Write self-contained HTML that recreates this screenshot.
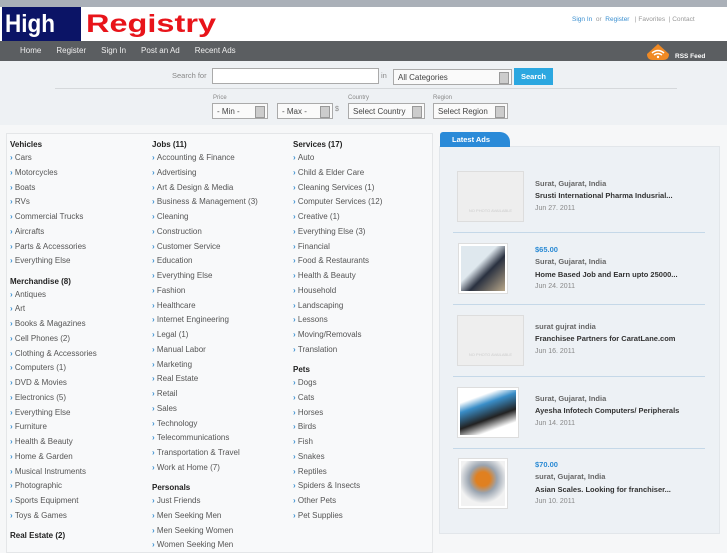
<!DOCTYPE html>
<html><head><meta charset="utf-8"><style>
*{margin:0;padding:0;box-sizing:border-box}
body{width:727px;height:545px;overflow:hidden;background:#f6f7f8;font-family:"Liberation Sans",sans-serif;position:relative}
.a{position:absolute;white-space:nowrap}
.sel{position:absolute;height:16px;border:1px solid #aaa;background:#fafafa;font-size:8px;color:#444;padding:3px 4px;line-height:9px}
.sel:after{content:"";position:absolute;right:2px;top:2px;width:8px;height:10px;background:#ccc;border:1px solid #999}
.col{position:absolute;top:139px;font-size:8px;color:#555;width:140px}
.col div{line-height:14.75px;height:14.75px}
.col div:before{content:"› ";color:#3a8fd0;font-weight:bold}
.col h4{font-size:8px;color:#222;line-height:12px;height:12px;margin-top:6.5px}
.col h4:first-child{margin-top:0}
.ad{position:absolute;left:535px;font-size:7.5px;font-weight:bold;line-height:12.3px}
.ad .p{color:#2a8ad4}.ad .l{color:#666}.ad .t{color:#333}.ad .d{color:#888;font-weight:normal;font-size:7px}
.img{position:absolute;border:1px solid #ddd;background:#fff;padding:2px}
.np{position:absolute;border:1px solid #ddd;background:#eee;font-size:4px;color:#ccc;text-align:center;padding-top:36px}
.sep{position:absolute;left:453px;width:252px;height:1px;background:#c5d8e8}
</style></head><body>
<div class="a" style="left:0;top:0;width:727px;height:7px;background:#aab0b8"></div>
<div class="a" style="left:0;top:7px;width:727px;height:34px;background:#fff"></div>
<div class="a" style="left:2px;top:7px;width:79px;height:34px;background:#0b1466"></div>
<div class="a" style="left:5px;top:10px;font:bold 25px/28px 'Liberation Sans',sans-serif;color:#fff;transform:scaleX(0.9);transform-origin:0 0">High</div>
<div class="a" style="left:86px;top:10px;font:bold 25px/28px 'Liberation Sans',sans-serif;color:#e8141a;transform:scaleX(1.3);transform-origin:0 0">Registry</div>
<div class="a" style="left:572px;top:16px;font-size:6.5px;color:#999"><span style="color:#3a8fd0">Sign In</span> &nbsp;or&nbsp; <span style="color:#3a8fd0">Register</span> &nbsp; | Favorites &nbsp;| Contact</div>
<div class="a" style="left:0;top:41px;width:727px;height:20px;background:#5b5e61"></div>
<div class="a" style="left:20px;top:46px;font-size:8px;color:#eee;word-spacing:0"><span>Home</span><span style="margin-left:15px">Register</span><span style="margin-left:15px">Sign In</span><span style="margin-left:15px">Post an Ad</span><span style="margin-left:15px">Recent Ads</span></div>
<svg class="a" style="left:645px;top:43px" width="26" height="18" viewBox="0 0 26 18"><path d="M2 11 L13 1 L24 11 Q24 17 18 17 L8 17 Q2 17 2 11Z" fill="#f08a24"/><path d="M7 10 Q13 5 19 10 M9 12 Q13 9 17 12" stroke="#fff" stroke-width="1.5" fill="none"/><circle cx="13" cy="14" r="1.2" fill="#fff"/></svg>
<div class="a" style="left:675px;top:53px;font-size:6.5px;font-weight:bold;color:#fff">RSS Feed</div>
<div class="a" style="left:0;top:61px;width:727px;height:64px;background:#eef1f4"></div>
<div class="a" style="left:172px;top:71px;font-size:7.5px;color:#888">Search for</div>
<div class="a" style="left:212px;top:68px;width:167px;height:16px;border:1px solid #aaa;background:#fff"></div>
<div class="a" style="left:381px;top:71px;font-size:7.5px;color:#888">in</div>
<div class="sel" style="left:393px;top:69px;width:119px">All Categories</div>
<div class="a" style="left:514px;top:68px;width:39px;height:17px;background:#2ba7e0;color:#fff;font-size:7.5px;font-weight:bold;text-align:center;line-height:17px">Search</div>
<div class="a" style="left:55px;top:88px;width:622px;height:1px;background:#d5d8db"></div>
<div class="a" style="left:213px;top:95px;font-size:6px;color:#888">Price</div>
<div class="a" style="left:348px;top:95px;font-size:6px;color:#888">Country</div>
<div class="a" style="left:433px;top:95px;font-size:6px;color:#888">Region</div>
<div class="sel" style="left:212px;top:103px;width:56px">- Min -</div>
<div class="sel" style="left:277px;top:103px;width:56px">- Max -</div>
<div class="a" style="left:335px;top:106px;font-size:7px;color:#888">$</div>
<div class="sel" style="left:348px;top:103px;width:77px">Select Country</div>
<div class="sel" style="left:433px;top:103px;width:75px">Select Region</div>
<div class="a" style="left:6px;top:133px;width:427px;height:420px;background:#f8f9fa;border:1px solid #e4e6e8"></div>
<div class="col" style="left:10px">
<h4>Vehicles</h4><div>Cars</div><div>Motorcycles</div><div>Boats</div><div>RVs</div><div>Commercial Trucks</div><div>Aircrafts</div><div>Parts &amp; Accessories</div><div>Everything Else</div>
<h4>Merchandise (8)</h4><div>Antiques</div><div>Art</div><div>Books &amp; Magazines</div><div>Cell Phones (2)</div><div>Clothing &amp; Accessories</div><div>Computers (1)</div><div>DVD &amp; Movies</div><div>Electronics (5)</div><div>Everything Else</div><div>Furniture</div><div>Health &amp; Beauty</div><div>Home &amp; Garden</div><div>Musical Instruments</div><div>Photographic</div><div>Sports Equipment</div><div>Toys &amp; Games</div>
<h4>Real Estate (2)</h4>
</div>
<div class="col" style="left:152px">
<h4>Jobs (11)</h4><div>Accounting &amp; Finance</div><div>Advertising</div><div>Art &amp; Design &amp; Media</div><div>Business &amp; Management (3)</div><div>Cleaning</div><div>Construction</div><div>Customer Service</div><div>Education</div><div>Everything Else</div><div>Fashion</div><div>Healthcare</div><div>Internet Engineering</div><div>Legal (1)</div><div>Manual Labor</div><div>Marketing</div><div>Real Estate</div><div>Retail</div><div>Sales</div><div>Technology</div><div>Telecommunications</div><div>Transportation &amp; Travel</div><div>Work at Home (7)</div>
<h4>Personals</h4><div>Just Friends</div><div>Men Seeking Men</div><div>Men Seeking Women</div><div>Women Seeking Men</div>
</div>
<div class="col" style="left:293px">
<h4>Services (17)</h4><div>Auto</div><div>Child &amp; Elder Care</div><div>Cleaning Services (1)</div><div>Computer Services (12)</div><div>Creative (1)</div><div>Everything Else (3)</div><div>Financial</div><div>Food &amp; Restaurants</div><div>Health &amp; Beauty</div><div>Household</div><div>Landscaping</div><div>Lessons</div><div>Moving/Removals</div><div>Translation</div>
<h4>Pets</h4><div>Dogs</div><div>Cats</div><div>Horses</div><div>Birds</div><div>Fish</div><div>Snakes</div><div>Reptiles</div><div>Spiders &amp; Insects</div><div>Other Pets</div><div>Pet Supplies</div>
</div>
<div class="a" style="left:439px;top:146px;width:281px;height:388px;background:#edf1f5;border:1px solid #e2e6ea"></div>
<div class="a" style="left:440px;top:132px;width:70px;height:15px;background:#2a8ad8;border-radius:3px 10px 0 0;color:#fff;font-size:7.5px;font-weight:bold;padding:3px 0 0 12px">Latest Ads</div>

<div class="np" style="left:457px;top:171px;width:67px;height:51px">NO PHOTO AVAILABLE</div>
<div class="ad" style="top:178px"><div class="l">Surat, Gujarat, India</div><div class="t">Srusti International Pharma Indusrial...</div><div class="d">Jun 27. 2011</div></div>
<div class="sep" style="top:232px"></div>
<div class="img" style="left:458px;top:243px;width:50px;height:51px"><div style="width:100%;height:100%;background:linear-gradient(135deg,#dfe8ee 40%,#2a3140 60%,#b9a88a)"></div></div>
<div class="ad" style="top:244px"><div class="p">$65.00</div><div class="l">Surat, Gujarat, India</div><div class="t">Home Based Job and Earn upto 25000...</div><div class="d">Jun 24. 2011</div></div>
<div class="sep" style="top:304px"></div>
<div class="np" style="left:457px;top:315px;width:67px;height:51px">NO PHOTO AVAILABLE</div>
<div class="ad" style="top:321px"><div class="l">surat gujrat india</div><div class="t">Franchisee Partners for CaratLane.com</div><div class="d">Jun 16. 2011</div></div>
<div class="sep" style="top:376px"></div>
<div class="img" style="left:457px;top:387px;width:62px;height:51px"><div style="width:100%;height:100%;background:linear-gradient(160deg,#fff 20%,#3a8ec8 35%,#222 60%,#fff 80%)"></div></div>
<div class="ad" style="top:393px"><div class="l">Surat, Gujarat, India</div><div class="t">Ayesha Infotech Computers/ Peripherals</div><div class="d">Jun 14. 2011</div></div>
<div class="sep" style="top:448px"></div>
<div class="img" style="left:458px;top:458px;width:50px;height:51px"><div style="width:100%;height:100%;background:radial-gradient(circle at 50% 40%,#e08020 20%,#9aa4b0 40%,#f2f2f2 70%)"></div></div>
<div class="ad" style="top:459px"><div class="p">$70.00</div><div class="l">surat, Gujarat, India</div><div class="t">Asian Scales. Looking for franchiser...</div><div class="d">Jun 10. 2011</div></div>
</body></html>
